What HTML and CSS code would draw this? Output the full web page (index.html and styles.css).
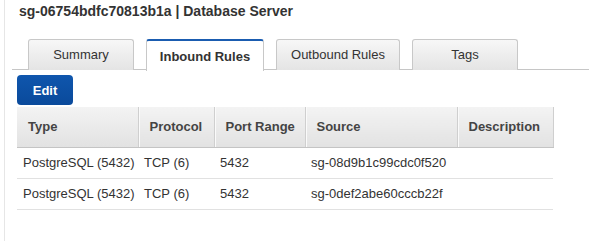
FILE: index.html
```html
<!DOCTYPE html>
<html lang="en">
<head>
    <meta charset="UTF-8">
    <title>Security Group</title>
    <link rel="stylesheet" href="styles.css">
</head>
<body>
    <div class="panel">
        <h2 class="title">sg-06754bdfc70813b1a | Database Server</h2>
        <div class="tabs">
            <div class="tab tab-summary">Summary</div>
            <div class="tab tab-inbound active">Inbound Rules</div>
            <div class="tab tab-outbound">Outbound Rules</div>
            <div class="tab tab-tags">Tags</div>
        </div>
        <div class="content">
            <button class="btn-edit">Edit</button>
            <table class="rules">
                <thead>
                    <tr>
                        <th class="col-type">Type</th>
                        <th class="col-proto">Protocol</th>
                        <th class="col-port">Port Range</th>
                        <th class="col-source">Source</th>
                        <th class="col-desc">Description</th>
                    </tr>
                </thead>
                <tbody>
                    <tr>
                        <td>PostgreSQL (5432)</td>
                        <td>TCP (6)</td>
                        <td>5432</td>
                        <td>sg-08d9b1c99cdc0f520</td>
                        <td></td>
                    </tr>
                    <tr>
                        <td>PostgreSQL (5432)</td>
                        <td>TCP (6)</td>
                        <td>5432</td>
                        <td>sg-0def2abe60cccb22f</td>
                        <td></td>
                    </tr>
                </tbody>
            </table>
        </div>
    </div>
</body>
</html>
```

FILE: styles.css
```css
body {
    margin: 0;
    padding: 0;
    background-color: #fff;
    font-family: "Liberation Sans", Arial, sans-serif;
    color: #333;
}
.panel {
    margin-left: 4px;
    height: 241px;
    border-left: 1px solid #e6e6e6;
    overflow: hidden;
}
.title {
    margin: 0;
    padding: 2px 0 0 14px;
    font-size: 14px;
    line-height: 18px;
    font-weight: bold;
    color: #333;
}
.tabs {
    display: flex;
    gap: 12px;
    margin: 19px 0 0 7px;
    padding-left: 16px;
    border-bottom: 1px solid #c6c6c6;
    height: 30px;
}
.tab {
    box-sizing: border-box;
    height: 31px;
    border: 1px solid #c8c8c8;
    border-bottom: none;
    border-radius: 3px 3px 0 0;
    background: linear-gradient(#f7f7f7, #e4e4e4);
    font-size: 13px;
    line-height: 30px;
    text-align: center;
    color: #333;
}
.tab-summary { width: 106px; }
.tab-inbound { width: 118px; }
.tab-outbound { width: 124px; }
.tab-tags { width: 106px; }
.tab.active {
    background: #fff;
    border-top: 2px solid #1a5cb0;
    font-weight: bold;
    line-height: 31px;
    height: 32px;
}
.content {
    padding: 5px 0 0 12px;
}
.btn-edit {
    display: block;
    width: 56px;
    height: 30px;
    padding: 0;
    border: none;
    border-radius: 4px;
    background: linear-gradient(#0f56ad, #0a4a9b);
    color: #fff;
    font-family: "Liberation Sans", Arial, sans-serif;
    font-size: 13px;
    font-weight: bold;
}
.rules {
    margin-top: 2px;
    width: 536px;
    border-collapse: collapse;
    font-size: 13px;
    table-layout: fixed;
}
.rules th,
.rules td {
    box-sizing: border-box;
}
.rules th {
    height: 40px;
    padding: 0 0 0 11px;
    text-align: left;
    font-weight: bold;
    color: #444;
    background: linear-gradient(#f3f3f3, #e2e2e2);
    border-right: 1px solid #cfcfcf;
    border-bottom: 1px solid #c4c4c4;
    box-shadow: inset 1px 0 0 #fafafa;
}
.rules th:first-child {
    box-shadow: none;
}
.col-type { width: 121px; }
.col-proto { width: 76px; }
.col-port { width: 91px; }
.col-source { width: 152px; }
.col-desc { width: 96px; }
.rules td {
    height: 31px;
    padding: 0 0 0 6px;
    border-bottom: 1px solid #e1e1e1;
    color: #333;
    white-space: nowrap;
}
```
